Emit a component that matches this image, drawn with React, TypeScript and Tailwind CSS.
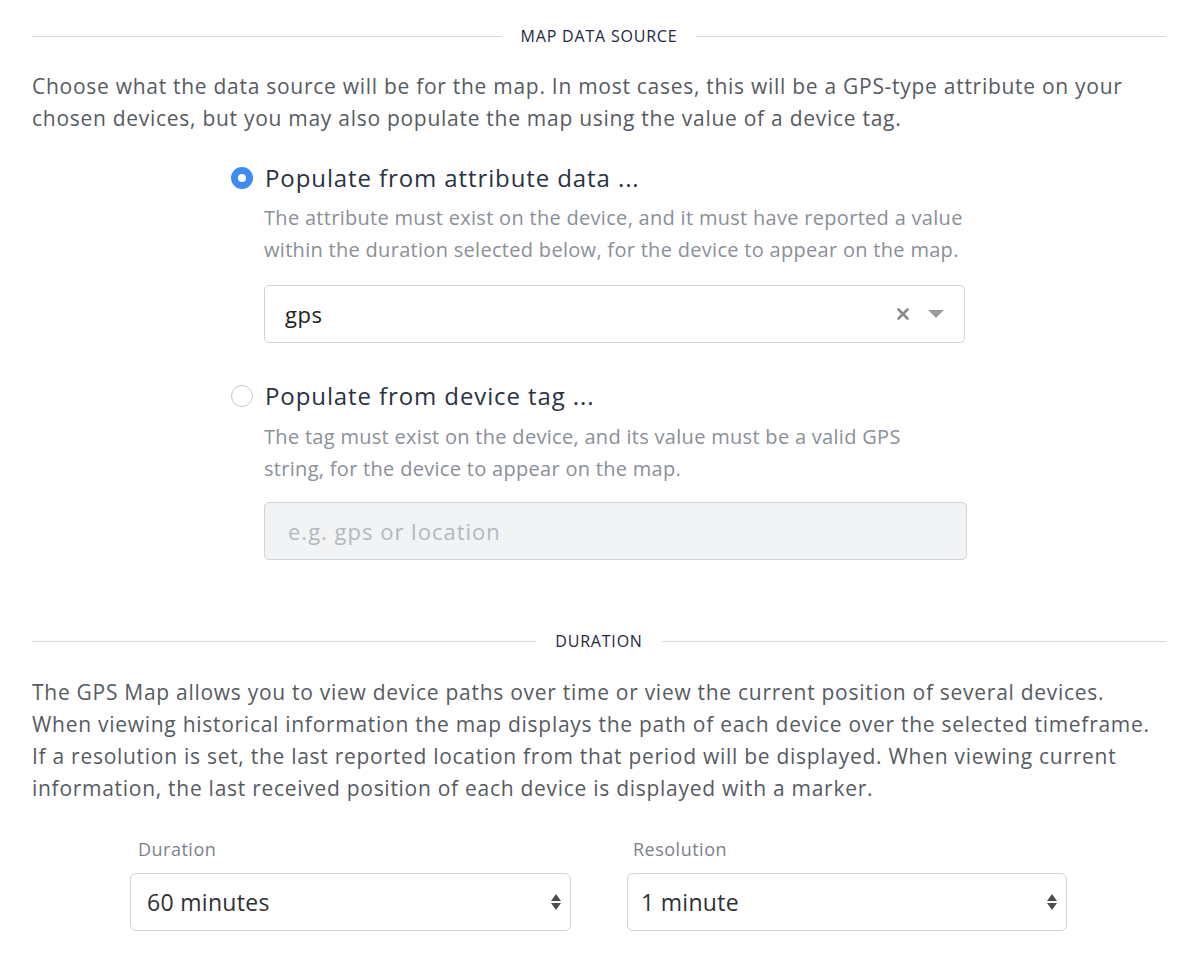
import { useState } from 'react';

const font = { fontFamily: '"Open Sans", "Noto Sans", sans-serif' };

function SectionHeader({ title }: { title: string }) {
  return (
    <div className="flex h-6 items-center gap-[19px]">
      <div className="h-px flex-1 bg-[#d6d9dd]" />
      <span className="text-[16px] leading-6 tracking-[0.8px] text-[#1e2840]">{title}</span>
      <div className="h-px flex-1 bg-[#d6d9dd]" />
    </div>
  );
}

function Lines({ lines, className }: { lines: string[]; className: string }) {
  return (
    <p className={className}>
      {lines.map((line) => (
        <span key={line} className="block whitespace-nowrap">
          {line}
        </span>
      ))}
    </p>
  );
}

function Radio({ checked }: { checked: boolean }) {
  return checked ? (
    <span className="flex h-[22px] w-[22px] shrink-0 items-center justify-center rounded-full bg-[#3f8bf6]">
      <span className="h-2 w-2 rounded-full bg-white" />
    </span>
  ) : (
    <span className="h-[22px] w-[22px] shrink-0 rounded-full border border-[#c4c7cc] bg-white" />
  );
}

function Updown() {
  return (
    <svg width="12" height="22" viewBox="0 0 12 22" className="shrink-0">
      <path d="M6 3 L11 10 L1 10 Z" fill="#4a4d52" />
      <path d="M6 19 L11 12 L1 12 Z" fill="#4a4d52" />
    </svg>
  );
}

export default function App() {
  const [source, setSource] = useState<'attribute' | 'tag'>('attribute');

  return (
    <div className="w-[1200px] bg-white pl-8 pr-[34px] pt-6 pb-12" style={font}>
      <SectionHeader title="MAP DATA SOURCE" />

      <Lines
        className="mt-[22px] text-[21px] leading-8 tracking-[0.72px] text-[#565b62]"
        lines={[
          'Choose what the data source will be for the map. In most cases, this will be a GPS-type attribute on your',
          'chosen devices, but you may also populate the map using the value of a device tag.',
        ]}
      />

      <div className="ml-[199px]">
        {/* attribute option */}
        <button
          type="button"
          onClick={() => setSource('attribute')}
          className="mt-7 flex h-8 items-center gap-3 text-[24px] tracking-[0.9px] text-[#2a3243]"
        >
          <Radio checked={source === 'attribute'} />
          <span>Populate from attribute data ...</span>
        </button>
        <div className="ml-[33px]">
          <Lines
            className="mt-2 text-[20px] leading-8 tracking-[0.3px] text-[#8a8f98]"
            lines={[
              'The attribute must exist on the device, and it must have reported a value',
              'within the duration selected below, for the device to appear on the map.',
            ]}
          />
          <div className="mt-[19px] flex h-[58px] w-[701px] items-center rounded-[5px] border border-[#cfd2d6] bg-white pl-5 pr-[20px]">
            <span className="flex-1 text-[22px] tracking-[0.5px] text-[#222222]">gps</span>
            <svg width="12" height="12" viewBox="0 0 12 12" className="mr-[19px]">
              <path d="M1.5 1.5 L10.5 10.5 M10.5 1.5 L1.5 10.5" stroke="#8a8a8a" strokeWidth="2.6" strokeLinecap="round" />
            </svg>
            <span className="h-0 w-0 border-x-[8px] border-t-[8px] border-x-transparent border-t-[#9a9a9a]" />
          </div>
        </div>

        {/* tag option */}
        <button
          type="button"
          onClick={() => setSource('tag')}
          className="mt-[37px] flex h-8 items-center gap-3 text-[24px] tracking-[0.9px] text-[#2a3243]"
        >
          <Radio checked={source === 'tag'} />
          <span>Populate from device tag ...</span>
        </button>
        <div className="ml-[33px]">
          <Lines
            className="mt-[9px] text-[20px] leading-8 tracking-[0.3px] text-[#8a8f98]"
            lines={[
              'The tag must exist on the device, and its value must be a valid GPS',
              'string, for the device to appear on the map.',
            ]}
          />
          <input
            disabled
            placeholder="e.g. gps or location"
            className="mt-[17px] block h-[58px] w-[703px] rounded-[5px] border border-[#cfd2d6] bg-[#f2f3f5] px-[23px] text-[22px] tracking-[1px] placeholder:text-[#b3b8bf]"
          />
        </div>
      </div>

      <div className="mt-[69px]">
        <SectionHeader title="DURATION" />
      </div>

      <Lines
        className="mt-[23px] text-[21px] leading-8 tracking-[0.72px] text-[#565b62]"
        lines={[
          'The GPS Map allows you to view device paths over time or view the current position of several devices.',
          'When viewing historical information the map displays the path of each device over the selected timeframe.',
          'If a resolution is set, the last reported location from that period will be displayed. When viewing current',
          'information, the last received position of each device is displayed with a marker.',
        ]}
      />

      <div className="mt-[33px] ml-[98px] flex gap-14">
        <div className="w-[441px]">
          <div className="pl-2 text-[18px] leading-6 tracking-[0.5px] text-[#7d828a]">Duration</div>
          <div className="mt-3 flex h-[58px] items-center rounded-[6px] border border-[#cfd2d6] bg-white pl-4 pr-[8px]">
            <span className="flex-1 text-[23px] tracking-[0.3px] text-[#2f3133]">60 minutes</span>
            <Updown />
          </div>
        </div>
        <div className="w-[440px]">
          <div className="pl-[6px] text-[18px] leading-6 tracking-[0.5px] text-[#7d828a]">Resolution</div>
          <div className="mt-3 flex h-[58px] items-center rounded-[6px] border border-[#cfd2d6] bg-white pl-[13px] pr-[8px]">
            <span className="flex-1 text-[23px] tracking-[0.3px] text-[#2f3133]">1 minute</span>
            <Updown />
          </div>
        </div>
      </div>
    </div>
  );
}
